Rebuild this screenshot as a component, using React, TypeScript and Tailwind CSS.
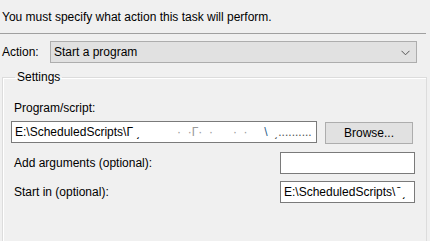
import React from "react";

export default function App() {
  const font = { fontFamily: '"Segoe UI", "Liberation Sans", Arial, sans-serif' };
  return (
    <div
      className="w-[430px] h-[241px] overflow-hidden bg-[#f0f0f0] text-[12px] leading-[16px] text-black"
      style={font}
    >
      <div className="pl-[2px] pt-[9px] h-[33px]">You must specify what action this task will perform.</div>
      <div className="w-[426px] border-t border-[#a0a0a0]" />
      <div className="flex items-center mt-[7px] h-[22px]">
        <div className="w-[50px] pl-[2px]">Action:</div>
        <div className="w-[367px] h-[22px] bg-[#e1e1e1] border border-[#adadad] flex items-center justify-between pl-[3px] pr-[6px]">
          <span>Start a program</span>
          <svg width="9" height="6" viewBox="0 0 9 6" className="mt-[1px]">
            <path d="M0.5 0.8 L4.5 4.8 L8.5 0.8" fill="none" stroke="#555" strokeWidth="1" />
          </svg>
        </div>
      </div>
      <fieldset className="ml-[2px] mt-[6px] w-[425px] h-[200px] border border-[#dcdcdc] shadow-[inset_1px_1px_0_#ffffff] pl-[8px] pr-[11px]">
        <legend className="ml-[4px] px-[2px] leading-[16px]">Settings</legend>
        <div className="ml-[3px] mt-[15px]">Program/script:</div>
        <div className="flex items-start mt-[5px]">
          <div className="w-[306px] h-[22px] bg-white border border-[#7a7a7a] flex items-center pl-[3px] overflow-hidden whitespace-pre">
            <span>E:\ScheduledScripts\Γ ͵</span>
            <span className="text-[#9a9a9a]">{"           ·  ·Γ·  ·      ·  ·     "}</span>
            <span className="text-[#2a5d8a]">\</span>
            <span className="text-[#555]">{"  ͵.........."}</span>
          </div>
          <button className="ml-[8px] mt-[1px] w-[88px] h-[22px] bg-[#e1e1e1] border border-[#adadad] flex items-center justify-center">
            Browse...
          </button>
        </div>
        <div className="flex items-center justify-between mt-[8px] h-[22px]">
          <div className="ml-[3px]">Add arguments (optional):</div>
          <div className="w-[135px] h-[22px] bg-white border border-[#7a7a7a]" />
        </div>
        <div className="flex items-center justify-between mt-[7px] h-[22px]">
          <div className="ml-[3px]">Start in (optional):</div>
          <div className="w-[135px] h-[22px] bg-white border border-[#7a7a7a] flex items-center pl-[3px] overflow-hidden whitespace-pre">
            E:\ScheduledScripts\ ̄ ͵
          </div>
        </div>
      </fieldset>
    </div>
  );
}
